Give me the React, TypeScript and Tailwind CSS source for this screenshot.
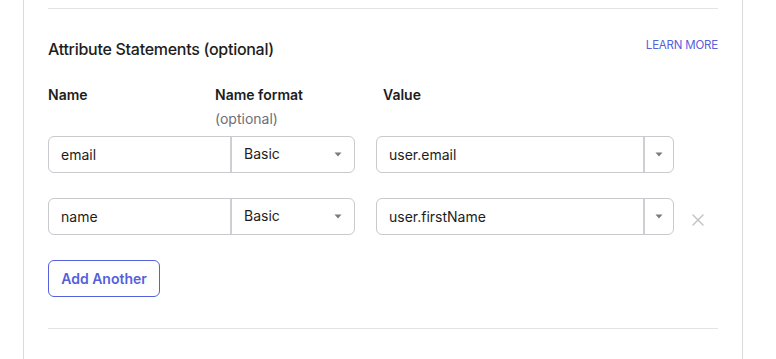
import React from "react";

const Caret = () => (
  <svg width="8" height="5" viewBox="0 0 8 5" className="shrink-0">
    <path d="M0.5 0.5 H7.5 L4 4.5 Z" fill="#7a7a80" />
  </svg>
);

const XIcon = () => (
  <svg width="12" height="12" viewBox="0 0 12 12">
    <path d="M1 1 L11 11 M11 1 L1 11" stroke="#c4c4c8" strokeWidth="1.5" strokeLinecap="round" />
  </svg>
);

function Row({ name, value, removable }: { name: string; value: string; removable?: boolean }) {
  return (
    <div className="flex items-center h-[37px]">
      <div className="flex w-[307px] h-[37px] border border-[#c9c9ce] rounded-[6px] overflow-hidden">
        <div className="w-[181px] flex items-center pl-3 text-[14px] text-[#1d1d21]">{name}</div>
        <div className="w-[2px] bg-[#cfcfd3]" />
        <div className="flex-1 flex items-center justify-between pl-3 pr-[12px] text-[14px] text-[#1d1d21]">
          <span className="-mt-[2px]">Basic</span>
          <Caret />
        </div>
      </div>
      <div className="ml-[21px] flex w-[298px] h-[37px] border border-[#c9c9ce] rounded-[6px] overflow-hidden">
        <div className="flex-1 flex items-center pl-3 text-[14px] text-[#1d1d21]">{value}</div>
        <div className="w-[2px] bg-[#cfcfd3]" />
        <div className="w-[28px] flex items-center justify-center">
          <Caret />
        </div>
      </div>
      {removable && (
        <div className="ml-[18px] mt-[6px] flex items-center">
          <XIcon />
        </div>
      )}
    </div>
  );
}

export default function App() {
  return (
    <div className="bg-white w-[776px] h-[359px] overflow-hidden font-['Inter',sans-serif] text-[#1d1d21]">
      <div className="ml-[23px] w-[720px] h-[359px] border-x border-[#d9d9de] px-6">
        <div className="pt-2">
          <div className="border-t border-[#e3e3e7]" />
        </div>
        <div className="mt-[28px] flex items-start justify-between">
          <h2 className="text-[16px] leading-6 font-medium tracking-[-0.28px]">Attribute Statements (optional)</h2>
          <a className="text-[11.5px] leading-4 text-[#5560dc] uppercase tracking-[-0.2px] mt-[0px]">Learn more</a>
        </div>
        <div className="mt-[22px] flex text-[14px] leading-6">
          <div className="w-[167px] font-semibold">Name</div>
          <div className="w-[168px]">
            <div className="font-semibold">Name format</div>
            <div className="text-[#6e6e78]">(optional)</div>
          </div>
          <div className="font-semibold">Value</div>
        </div>
        <div className="mt-[5px]">
          <Row name="email" value="user.email" />
        </div>
        <div className="mt-[25px]">
          <Row name="name" value="user.firstName" removable />
        </div>
        <button className="mt-[25px] w-[112px] h-[37px] border border-[#5560dc] rounded-[6px] text-[14px] font-semibold text-[#5560dc] flex items-center justify-center">
          Add Another
        </button>
        <div className="mt-[31px] border-t border-[#e3e3e7]" />
      </div>
    </div>
  );
}
